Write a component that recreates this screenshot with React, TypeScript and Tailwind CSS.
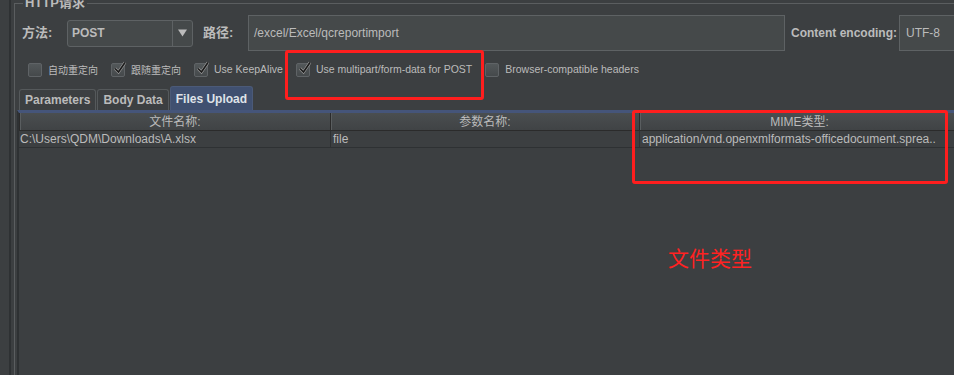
import { ReactNode } from 'react';

const font = "font-['Liberation_Sans','Noto_Sans_CJK_SC',sans-serif]";

function CheckBox({ checked, label, latin }: { checked: boolean; label: string; latin?: boolean }) {
  return (
    <div className="flex items-center gap-[6px]">
      <div className="w-[14px] h-[14px] border border-[#5f6366] bg-gradient-to-b from-[#53585a] to-[#45494b] rounded-[2px] relative">
        {checked && (
          <svg viewBox="0 0 14 14" className="absolute left-[1px] -top-[3px] w-[14px] h-[14px]">
            <path d="M2 7.5 L5.5 11 L12 1.5" fill="none" stroke="#9a9a9a" strokeWidth="3" />
            <path d="M2 7.5 L5.5 11 L12 1.5" fill="none" stroke="#1c1c1c" strokeWidth="1.6" />
          </svg>
        )}
      </div>
      <span className={latin ? 'text-[10.5px] text-[#bbbbbb] whitespace-nowrap' : 'text-[10px] text-[#bbbbbb] whitespace-nowrap'}>
        {label}
      </span>
    </div>
  );
}

function Tab({ children, active }: { children: ReactNode; active?: boolean }) {
  return (
    <div
      className={
        active
          ? 'h-[24px] px-[5px] flex items-center bg-[#405070] border border-[#4b5a78] border-b-0 rounded-t-[3px] text-[12px] font-bold text-[#dfe3e8]'
          : 'h-[21px] px-[5px] flex items-center bg-[#3c3f41] border border-[#55595b] border-b-0 rounded-t-[3px] text-[12px] font-bold text-[#bbbbbb]'
      }
    >
      {children}
    </div>
  );
}

function HeadCell({ children, w }: { children: ReactNode; w: string }) {
  return (
    <div className={`${w} h-full flex items-center justify-center border-l border-[#2b2b2b] shadow-[inset_1px_0_0_#5a5e60] text-[12px] text-[#bbbbbb]`}>
      {children}
    </div>
  );
}

export default function App() {
  return (
    <div className={`w-[954px] h-[375px] overflow-hidden bg-[#3c3f41] ${font}`}>
      <div className="flex h-full">
        <div className="w-[9px] shrink-0" />
        <div className="w-[2px] shrink-0 bg-[#2e3133]" />
        <div className="w-[3px] shrink-0" />
        <fieldset className="-mt-[3px] w-[1000px] shrink-0 h-[390px] border border-[#5b5e60] border-r-0 pl-[7px] pr-0 pb-0 pt-0 min-w-0">
          <legend className="ml-[1px] px-[2px] text-[13px] font-bold text-[#bbbbbb] leading-[12px]">HTTP请求</legend>

          <div className="flex items-center h-[36px] mt-[6px]">
            <span className="text-[13px] font-bold text-[#bbbbbb] w-[45px]">方法:</span>
            <div className="w-[126px] h-[27px] flex border border-[#5e6264] bg-[#45494a] rounded-[3px]">
              <span className="flex-1 pl-[4px] flex items-center text-[12px] font-bold text-[#bbbbbb]">POST</span>
              <div className="w-[20px] border-l border-[#5e6264] flex items-center justify-center">
                <svg viewBox="0 0 10 8" className="w-[9px] h-[8px]">
                  <path d="M0 0 H10 L5 8 Z" fill="#bbbbbb" />
                </svg>
              </div>
            </div>
            <span className="ml-[10px] w-[45px] text-[13px] font-bold text-[#bbbbbb]">路径:</span>
            <div className="w-[537px] h-[36px] border border-[#5e6264] bg-[#45494a] pl-[5px] flex items-center text-[12px] text-[#bbbbbb]">
              /excel/Excel/qcreportimport
            </div>
            <span className="ml-[6px] w-[108px] text-[12px] font-bold text-[#bbbbbb] whitespace-nowrap">Content encoding:</span>
            <div className="w-[100px] h-[36px] border border-[#5e6264] bg-[#45494a] pl-[6px] flex items-center text-[12px] text-[#bbbbbb]">
              UTF-8
            </div>
          </div>

          <div className="flex items-center h-[24px] mt-[7px] pl-[6px] gap-[13px]">
            <CheckBox checked={false} label="自动重定向" />
            <CheckBox checked label="跟随重定向" />
            <CheckBox checked latin label="Use KeepAlive" />
            <CheckBox checked latin label="Use multipart/form-data for POST" />
            <CheckBox checked={false} latin label="Browser-compatible headers" />
          </div>

          <div className="mt-[4px] -ml-[4px] flex items-end h-[24px] gap-[1px] pl-[1px]">
            <Tab>Parameters</Tab>
            <Tab>Body Data</Tab>
            <Tab active>Files Upload</Tab>
          </div>

          <div className="-ml-[5px] border-l-2 border-t-[3px] border-[#2e3133] border-t-[#45557a] h-[300px]">
            <div className="flex h-[18px] bg-gradient-to-b from-[#4a4e50] to-[#404345] border-b border-[#2b2b2b]">
              <HeadCell w="w-[311px]">文件名称:</HeadCell>
              <HeadCell w="w-[309px]">参数名称:</HeadCell>
              <HeadCell w="w-[320px]">MIME类型:</HeadCell>
            </div>
            <div className="flex h-[17px] border-b border-[#2e3133] text-[12px] text-[#bbbbbb] leading-[16px]">
              <div className="w-[311px] pl-[1px] whitespace-nowrap">C:\Users\QDM\Downloads\A.xlsx</div>
              <div className="w-[309px] pl-[2px] border-l border-[#2e3133]">file</div>
              <div className="w-[320px] pl-[2px] border-l border-[#2e3133] whitespace-nowrap">
                application/vnd.openxmlformats-officedocument.sprea..
              </div>
            </div>
            <div className="flex">
              <div className="w-[649px]" />
              <div className="mt-[99px] text-[21px] leading-[24px] text-[#ff2222]">文件类型</div>
            </div>
          </div>
        </fieldset>
      </div>

      <div className="absolute left-[285px] top-[50px] w-[199px] h-[50px] border-[3px] border-[#ff1e1e] rounded-[3px] pointer-events-none" />
      <div className="absolute left-[632px] top-[110px] w-[316px] h-[74px] border-[3px] border-[#ff1e1e] rounded-[3px] pointer-events-none" />
    </div>
  );
}
